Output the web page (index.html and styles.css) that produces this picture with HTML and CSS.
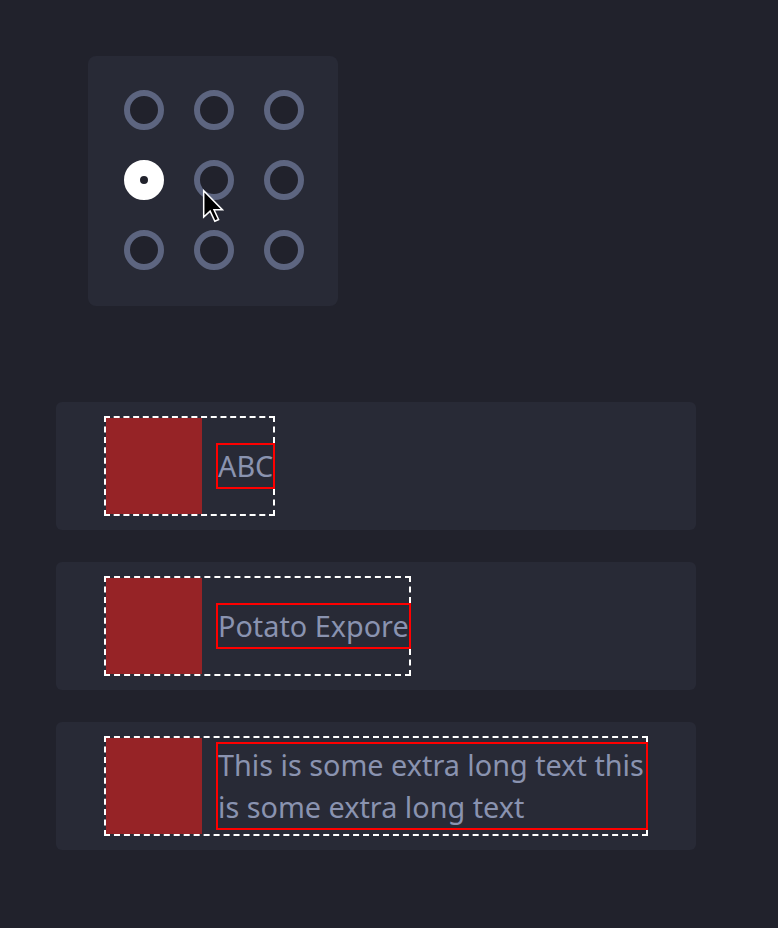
FILE: index.html
```html
<!DOCTYPE html>
<html lang="en">
<head>
    <meta charset="UTF-8">
    <meta name="viewport" content="width=device-width, initial-scale=1.0">
    <title>Layout Playground</title>
    <link rel="stylesheet" href="styles.css">
</head>
<body>
    <div class="page">
        <div class="radio-card">
            <div class="radio-grid">
                <input class="radio" type="radio" name="anchor" value="tl">
                <input class="radio" type="radio" name="anchor" value="tc">
                <input class="radio" type="radio" name="anchor" value="tr">
                <input class="radio" type="radio" name="anchor" value="ml" checked>
                <input class="radio" type="radio" name="anchor" value="mc">
                <input class="radio" type="radio" name="anchor" value="mr">
                <input class="radio" type="radio" name="anchor" value="bl">
                <input class="radio" type="radio" name="anchor" value="bc">
                <input class="radio" type="radio" name="anchor" value="br">
            </div>
            <svg class="cursor" width="22" height="34" viewBox="0 0 13 20">
                <path d="M1 1 L1 16.5 L4.8 13 L7.6 19 L9.8 18 L7.1 12.2 L12 12.2 Z" fill="#000" stroke="#fff" stroke-width="0.9" stroke-linejoin="miter"/>
            </svg>
        </div>

        <div class="list">
            <div class="row">
                <div class="item">
                    <div class="swatch"></div>
                    <span class="label">ABC</span>
                </div>
            </div>
            <div class="row">
                <div class="item">
                    <div class="swatch"></div>
                    <span class="label">Potato Expore</span>
                </div>
            </div>
            <div class="row">
                <div class="item">
                    <div class="swatch"></div>
                    <span class="label">This is some extra long text this is some extra long text</span>
                </div>
            </div>
        </div>
    </div>
</body>
</html>
```

FILE: styles.css
```css
body {
    margin: 0;
    background: #21222c;
    font-family: "Noto Sans", sans-serif;
}
.page {
    padding: 56px 82px 0 56px;
}
.radio-card {
    position: relative;
    width: 250px;
    box-sizing: border-box;
    margin-left: 32px;
    padding: 34px 34px 36px 36px;
    background: #282a36;
    border-radius: 8px;
}
.radio-grid {
    display: grid;
    grid-template-columns: repeat(3, 40px);
    grid-auto-rows: 40px;
    gap: 30px;
}
.radio {
    appearance: none;
    margin: 0;
    width: 40px;
    height: 40px;
    box-sizing: border-box;
    border: 6px solid #5d6580;
    border-radius: 50%;
    background: #21222c;
    cursor: pointer;
}
.radio:checked {
    border: 16px solid #fff;
}
.cursor {
    position: absolute;
    left: 114px;
    top: 133px;
    pointer-events: none;
}
.list {
    margin-top: 96px;
    display: flex;
    flex-direction: column;
    gap: 32px;
}
.row {
    width: 640px;
    box-sizing: border-box;
    padding: 14px 48px;
    background: #282a36;
    border-radius: 6px;
}
.item {
    display: flex;
    align-items: center;
    gap: 16px;
    width: fit-content;
    border: 2px dashed #fff;
}
.swatch {
    flex: none;
    width: 96px;
    height: 96px;
    background: #962326;
}
.label {
    color: #8a93b0;
    font-size: 28.8px;
    line-height: 42px;
    outline: 2px solid #f00;
}
```
